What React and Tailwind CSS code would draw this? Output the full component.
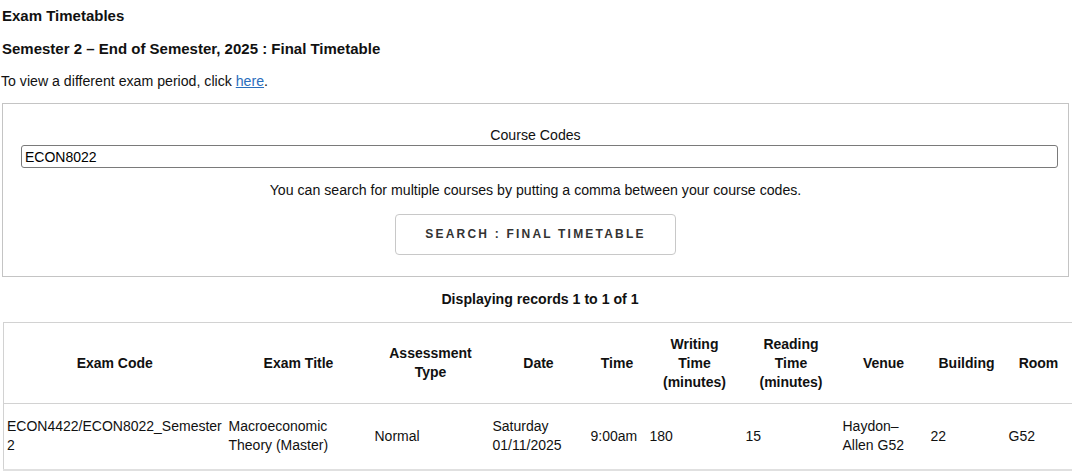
import React, { useState } from "react";

const columns = [
  { key: "code", label: ["Exam Code"], width: 222 },
  { key: "title", label: ["Exam Title"], width: 146 },
  { key: "type", label: ["Assessment", "Type"], width: 118 },
  { key: "date", label: ["Date"], width: 98 },
  { key: "time", label: ["Time"], width: 59 },
  { key: "writing", label: ["Writing", "Time", "(minutes)"], width: 96 },
  { key: "reading", label: ["Reading", "Time", "(minutes)"], width: 97 },
  { key: "venue", label: ["Venue"], width: 88 },
  { key: "building", label: ["Building"], width: 78 },
  { key: "room", label: ["Room"], width: 66 },
];

const records = [
  {
    code: ["ECON4422/ECON8022_Semester", "2"],
    title: ["Macroeconomic", "Theory (Master)"],
    type: ["Normal"],
    date: ["Saturday", "01/11/2025"],
    time: ["9:00am"],
    writing: ["180"],
    reading: ["15"],
    venue: ["Haydon–", "Allen G52"],
    building: ["22"],
    room: ["G52"],
  },
];

function Lines({ lines }) {
  return lines.map((l, i) => (
    <span key={i} className="block whitespace-nowrap">
      {l}
    </span>
  ));
}

export default function App() {
  const [codes, setCodes] = useState("ECON8022");

  return (
    <div className="min-h-screen bg-white font-['Liberation_Sans',Arial,sans-serif] text-[14.15px] leading-[19px] text-[#111]">
      {/* page titles */}
      <h1 className="pl-[2px] pt-[6px] text-[15px] font-bold">Exam Timetables</h1>
      <h2 className="mt-[14px] pl-[2px] text-[15px] font-bold">
        Semester 2 – End of Semester, 2025 : Final Timetable
      </h2>
      <p className="mt-[14px] pl-[1px]">
        To view a different exam period, click{" "}
        <a href="#" className="text-[#2a6ebd] underline">
          here
        </a>
        .
      </p>

      {/* search form */}
      <form
        onSubmit={(e) => e.preventDefault()}
        className="mt-[12px] ml-[2px] w-[1067px] border border-[#c4c4c4] pt-[22px] pb-[21px] text-center"
      >
        <label htmlFor="codes" className="block">
          Course Codes
        </label>
        <div className="flex pl-[18px] pr-[10px]">
          <input
            id="codes"
            value={codes}
            onChange={(e) => setCodes(e.target.value)}
            className="h-[23px] w-full rounded-[3px] border border-[#7a7a7a] px-[3px] text-left text-[14px] text-black outline-none"
          />
        </div>
        <p className="mt-[13px]">
          You can search for multiple courses by putting a comma between your course codes.
        </p>
        <button
          type="submit"
          className="mt-[14px] h-[41px] w-[281px] rounded-[4px] border border-[#c8c8c8] bg-white text-[12px] font-bold tracking-[2.2px] text-[#333]"
        >
          SEARCH : FINAL TIMETABLE
        </button>
      </form>

      <p className="mt-[13px] text-center font-bold">Displaying records 1 to 1 of 1</p>

      {/* results */}
      <table className="mt-[13px] ml-[3px] w-[1068px] table-fixed border-collapse text-[14px]">
        <colgroup>
          {columns.map((c) => (
            <col key={c.key} style={{ width: c.width }} />
          ))}
        </colgroup>
        <thead>
          <tr className="h-[81px] border-t border-l border-[#d2d2d2]">
            {columns.map((c) => (
              <th key={c.key} className="px-[3px] text-center align-middle font-bold">
                <Lines lines={c.label} />
              </th>
            ))}
          </tr>
        </thead>
        <tbody>
          {records.map((r, i) => (
            <tr
              key={i}
              className="h-[66px] border-t border-l border-[#d2d2d2] [border-bottom:2px_solid_#e0e0e0]"
            >
              {columns.map((c) => (
                <td key={c.key} className="px-[3px] text-left align-middle">
                  <Lines lines={r[c.key]} />
                </td>
              ))}
            </tr>
          ))}
        </tbody>
      </table>
    </div>
  );
}
